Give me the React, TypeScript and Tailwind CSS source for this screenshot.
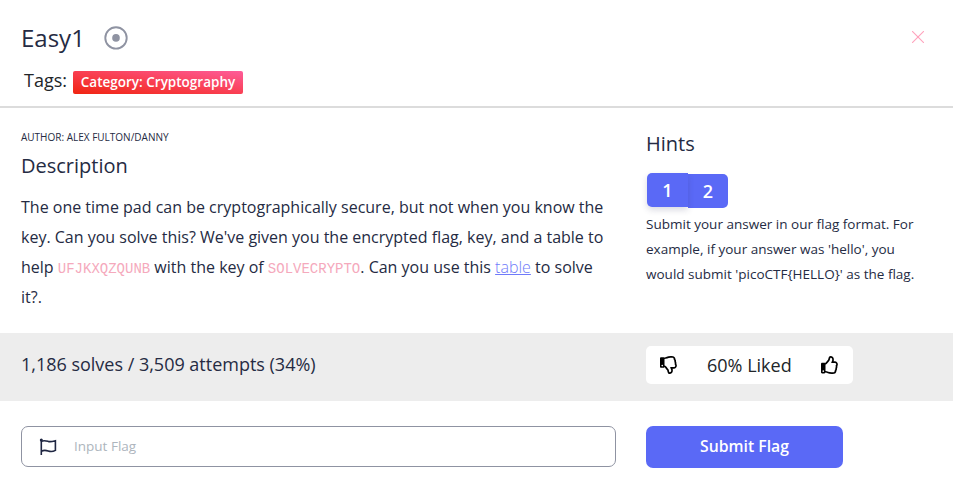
import React from "react";
import { FaRegThumbsUp, FaRegThumbsDown } from "react-icons/fa";

function Header() {
  return (
    <header className="h-[108px] border-b-2 border-[#dcdcdc] pl-[21px] pr-[29px] pt-[20px]">
      <div className="flex h-9 items-center">
        <h1 className="w-[83px] whitespace-nowrap text-[24px] leading-9">Easy1</h1>
        <svg className="h-6 w-6" viewBox="0 0 24 24" fill="none">
          <circle cx="12" cy="11.9" r="10.7" stroke="#8f93a2" strokeWidth="1.9" />
          <circle cx="12" cy="11.9" r="3.8" fill="#8f93a2" />
        </svg>
        <svg className="mb-[2px] ml-auto h-3 w-3" viewBox="0 0 12 12" stroke="#ffa3bd" strokeWidth="1.1">
          <path d="M0 0L12 12M12 0L0 12" />
          <path d="M5 5h2v2h-2z" fill="#ffa3bd" stroke="none" />
        </svg>
      </div>
      <div className="mt-[11px] flex items-start pl-[3px] text-[#212529]">
        <span className="w-[49px] whitespace-nowrap text-[18px] leading-[27px]">Tags:</span>
        <span className="mt-[4px] h-[22.5px] w-[170px] whitespace-nowrap rounded-[2px] bg-[linear-gradient(to_top_right,#f02411,#f93f52_50%,#fe5c9a)] text-center text-[13.5px] font-semibold leading-[22px] text-white">
          Category: Cryptography
        </span>
      </div>
    </header>
  );
}

function Details() {
  return (
    <main className="flex h-[225px] pl-[21px]">
      <section className="w-[625px]">
        <p className="mt-[21px] text-[10px] leading-4">AUTHOR: ALEX FULTON/DANNY</p>
        <h2 className="mt-[6px] text-[20px] leading-[30px]">Description</h2>
        <p className="mt-[11px] w-[595px] text-[16px] leading-[30px]">
          The one time pad can be cryptographically secure, but not when you know the key. Can you
          solve this? We've given you the encrypted flag, key, and a table to help{" "}
          <code className="font-['Liberation_Mono',monospace] text-[14px] leading-none text-[#f5a9bc]">UFJKXQZQUNB</code> with the key of{" "}
          <code className="font-['Liberation_Mono',monospace] text-[14px] leading-none text-[#f5a9bc]">SOLVECRYPTO</code>. Can you use this{" "}
          <a className="font-light text-[#6f7bfa] underline">table</a> to solve it?.
        </p>
      </section>
      <aside className="w-[285px] pt-[21px]">
        <h2 className="text-[20px] leading-[30px]">Hints</h2>
        <div className="mt-[14px] flex pl-px text-[18px] font-semibold text-white">
          <button className="z-10 h-[34px] w-[41px] rounded-l-[5px] bg-[#5a69f6] leading-[34px] shadow-[0_3px_6px_rgba(50,50,93,.18)]">1</button>
          <button className="mt-px h-[34px] w-[40px] rounded-r-[5px] bg-[#5a69f6] leading-[34px]">2</button>
        </div>
        <p className="mt-[4px] text-[13.53px] leading-[25px]">
          Submit your answer in our flag format. For example, if your answer was 'hello', you would
          submit 'picoCTF&#123;HELLO&#125;' as the flag.
        </p>
      </aside>
    </main>
  );
}

function Stats() {
  return (
    <section className="flex h-[68px] items-start bg-[#ededed] pl-[21px]">
      <p className="mt-[18px] w-[625px] text-[18px] leading-[27px] tracking-[-0.01px]">1,186 solves / 3,509 attempts (34%)</p>
      <div className="mt-[13px] flex h-[38px] w-[207px] items-center rounded-[5px] bg-white pl-[14px] text-[#212529]">
        <FaRegThumbsDown className="size-[18px] text-black" />
        <span className="ml-[29px] w-[114px] whitespace-nowrap text-[18px] leading-[27px]">60% Liked</span>
        <FaRegThumbsUp className="size-[18px] text-black" />
      </div>
    </section>
  );
}

function FlagForm() {
  return (
    <form className="flex items-start pl-[21px] pt-[25px]">
      <label className="mr-[30px] flex h-[41px] w-[595px] items-center rounded-[7px] border border-[#8f93a2] pl-[17px]">
        <svg className="h-[18px] w-[18px] shrink-0" viewBox="0 0 18 18" fill="none" stroke="#1f2642" strokeWidth="1.6">
          <path d="M2.3 1.5V17" />
          <circle cx="2.3" cy="1.9" r="1.5" fill="#1f2642" stroke="none" />
          <path d="M2.3 3.3C5 2 7 2.7 9.3 3.4C11.5 4.1 13.8 3.4 16.4 2.8V12.4C14 13.7 11.5 13.8 9.2 13C6.8 12.2 4.5 12.2 2.3 13.2" />
        </svg>
        <input
          placeholder="Input Flag"
          className="ml-[17px] w-[500px] bg-transparent text-[13.5px] outline-none placeholder:text-[#adb5bd]"
        />
      </label>
      <button type="button" className="h-[42px] w-[197px] rounded-[7px] bg-[#5a69f6] pb-[2px] text-[15.75px] font-semibold leading-6 text-white">
        Submit Flag
      </button>
    </form>
  );
}

export default function App() {
  return (
    <div className="h-[490px] w-[953px] overflow-hidden bg-white font-['Open_Sans',sans-serif] text-[#252b43]">
      <Header />
      <Details />
      <Stats />
      <FlagForm />
    </div>
  );
}
